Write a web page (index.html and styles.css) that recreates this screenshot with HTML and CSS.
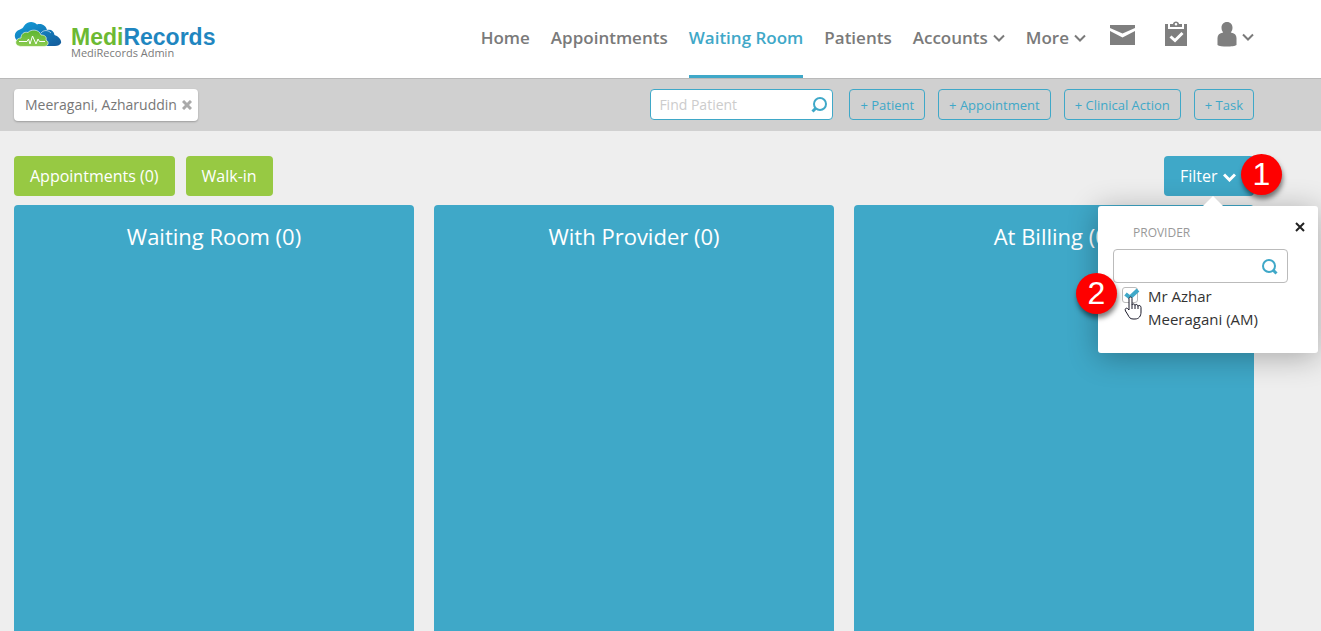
FILE: index.html
```html
<!DOCTYPE html>
<html lang="en">
<head>
  <meta charset="UTF-8" />
  <title>MediRecords - Waiting Room</title>
  <link rel="stylesheet" href="styles.css">
</head>
<body>

<header class="header">
  <a class="logo" href="#">
    <svg class="logo-cloud" width="48" height="26" viewBox="0 0 48 26" aria-hidden="true">
      <defs>
        <linearGradient id="blue" x1="0" y1="0" x2="1" y2="1">
          <stop offset="0" stop-color="#12a0dc" />
          <stop offset="1" stop-color="#155a9a" />
        </linearGradient>
        <linearGradient id="green" x1="0" y1="0" x2="0" y2="1">
          <stop offset="0" stop-color="#5cb531" />
          <stop offset="1" stop-color="#8ccb50" />
        </linearGradient>
      </defs>
      <path fill="url(#blue)" d="M4 19C-1 16 0 9 6 7.500C8 6.500 9 6 10 4C13 -1 20 -1 23 2.500C28 1 32 4 33 8C37 7 40 9 40.500 13C44 14 48 18 47 21C46 23 44 24 41 24H8Z" />
      <path fill="none" stroke="#fff" stroke-width="0.600" d="M27 11C30 7.500 34 8 37 11" />
      <path fill="url(#green)" stroke="#fff" stroke-width="0.600" d="M8 24.500C3 24.500 1 22 2 19C3 17 5 16 7 16C7 12 10 9.500 14 10.500C17 7 25 7 27 13C31 13 33 15 32 18C36 20 34 24.500 30 24.500Z" />
      <path fill="none" stroke="#fff" stroke-width="1" stroke-linejoin="round" d="M5 19.500H13L14.500 17L16 22L18.500 14L22 22L24 17L25.500 19.500H31" />
    </svg>
    <span class="logo-text">
      <span class="logo-name">Medi<span class="logo-blue">Records</span></span>
      <span class="logo-sub">MediRecords Admin</span>
    </span>
  </a>

  <nav class="nav">
    <a href="#">Home</a>
    <a href="#">Appointments</a>
    <a class="active" href="#">Waiting Room</a>
    <a href="#">Patients</a>
    <a href="#">Accounts <svg class="chevron" width="12" height="8" viewBox="0 0 12 8" aria-hidden="true"><path d="M1 1.500L6 6.500L11 1.500" /></svg></a>
    <a href="#">More <svg class="chevron" width="12" height="8" viewBox="0 0 12 8" aria-hidden="true"><path d="M1 1.500L6 6.500L11 1.500" /></svg></a>
  </nav>

  <div class="header-icons">
    <a href="#" aria-label="Messages">
      <svg width="25" height="26" viewBox="0 0 25 26"><path d="M0 4H25V7L12.500 12.500L0 7ZM0 10L12.500 16.500L25 10V24H0Z" /></svg>
    </a>
    <a href="#" aria-label="Tasks">
      <svg width="22" height="26" viewBox="0 0 22 26">
        <path d="M0 3H3V8H19V3H22V25H0Z" />
        <path fill-rule="evenodd" d="M5 3H8C8 -0.500 14 -0.500 14 3H17V6H5ZM9.700 3.200A1.300 1.300 0 1 0 12.300 3.200A1.300 1.300 0 1 0 9.700 3.200Z" />
        <path class="tick" d="M5.500 15.500L10 19.500L17.500 12" />
      </svg>
    </a>
    <a class="user" href="#" aria-label="Account">
      <svg width="20" height="26" viewBox="0 0 20 26"><path d="M10 1C13.500 1 15.500 3.500 15.500 6.500C15.500 8.500 15 10 13.800 11.500C17.500 12 19.500 14 19.500 17V24C17 26 3 26 0.500 24V17C0.500 14 2.500 12 6.200 11.500C5 10 4.500 8.500 4.500 6.500C4.500 3.500 6.500 1 10 1Z" /></svg>
      <svg class="chevron" width="12" height="8" viewBox="0 0 12 8"><path d="M1 1.500L6 6.500L11 1.500" /></svg>
    </a>
  </div>
</header>

<div class="toolbar">
  <div class="patient-tag">
    Meeragani, Azharuddin
    <button type="button" aria-label="Remove patient">
      <svg width="10" height="10" viewBox="0 0 10 10"><path d="M1 1L9 9M9 1L1 9" /></svg>
    </button>
  </div>
  <div class="find-patient">
    <input type="text" placeholder="Find Patient" aria-label="Find Patient" />
    <svg width="16" height="16" viewBox="0 0 16 16" aria-hidden="true"><circle cx="9" cy="7" r="6" /><path class="handle" d="M5 11L1.500 14.500" /></svg>
  </div>
  <div class="add-buttons">
    <button type="button">+ Patient</button>
    <button type="button">+ Appointment</button>
    <button type="button">+ Clinical Action</button>
    <button type="button">+ Task</button>
  </div>
</div>

<main class="main">
  <div class="actions">
    <button class="btn green" type="button">Appointments (0)</button>
    <button class="btn green" type="button">Walk-in</button>

    <div class="filter">
      <button class="btn blue" type="button">Filter <svg class="chevron" width="13" height="9" viewBox="0 0 13 9" aria-hidden="true"><path d="M1 1.500L6.500 7L12 1.500" /></svg></button>
      <span class="step step-one">1</span>

      <div class="popover">
        <button class="close" type="button" aria-label="Close">
          <svg width="10" height="10" viewBox="0 0 10 10"><path d="M1 1L9 9M9 1L1 9" /></svg>
        </button>
        <label class="popover-title" for="provider-search">PROVIDER</label>
        <div class="provider-search">
          <input type="text" id="provider-search" />
          <svg width="16" height="16" viewBox="0 0 16 16" aria-hidden="true"><circle cx="7" cy="7" r="6" /><path class="handle" d="M11 11L14.500 14.500" /></svg>
        </div>
        <div class="provider">
          <input type="checkbox" id="provider-am" checked />
          <label for="provider-am">Mr Azhar Meeragani (AM)</label>
          <svg class="provider-tick" width="16" height="12" viewBox="0 0 16 12" aria-hidden="true"><path d="M1.500 6L6 9.500L14 2" /></svg>
          <svg class="cursor" width="18" height="24" viewBox="0 0 18 24" aria-hidden="true">
            <path d="M5 14V2.500C5 0.500 8 0.500 8 2.500V9C8 7.500 11 7.500 11 9.500C11 8 14 8 14 10.500C14 9 17 9 17 11.500V16C17 20 15 23 11 23H9C6 23 5 21 4 19L1.500 15C0.500 13 2 11.500 3.500 12.500Z" />
            <path d="M8 9V13M11 9.500V13M14 10.500V13" />
          </svg>
        </div>
        <span class="step step-two">2</span>
      </div>
    </div>
  </div>

  <div class="columns">
    <section class="column"><h2>Waiting Room (0)</h2></section>
    <section class="column"><h2>With Provider (0)</h2></section>
    <section class="column"><h2>At Billing (0)</h2></section>
  </div>
</main>

</body>
</html>
```

FILE: styles.css
```css
* { box-sizing: border-box; }
body {
  display: flex;
  flex-direction: column;
  min-height: 100vh;
  margin: 0;
  background: #eee;
  color: #333;
  font-family: "Open Sans", sans-serif;
}
svg { display: block; flex: none; }
button, input { font-family: inherit; margin: 0; }
button { cursor: pointer; }
a { color: inherit; text-decoration: none; }

.chevron { fill: none; stroke: currentColor; stroke-width: 2; }

/* header */
.header {
  display: flex;
  height: 79px;
  padding: 0 67px 0 14px;
  background: #fff;
  border-bottom: 1px solid #b9b9b9;
  color: #7a7a7a;
}
.logo { display: flex; gap: 9px; margin-right: auto; padding-top: 22px; }
.logo-text { display: flex; flex-direction: column; padding-top: 5px; }
.logo-name {
  color: #6cb933;
  font: bold 23px/20px "Liberation Sans", sans-serif;
}
.logo-blue { color: #1f86c0; }
.logo-sub { font-size: 11px; line-height: 12px; }

.nav { display: flex; gap: 21px; font-size: 17px; font-weight: 600; line-height: 24px; }
.nav a { display: flex; align-items: center; gap: 5px; height: 78px; border-bottom: 3px solid transparent; }
.nav .active { color: #3fa8c8; border-color: #3fa8c8; }
.header-icons { display: flex; gap: 30px; margin-left: 24px; padding-top: 21px; fill: #7f7f7f; }
.tick { fill: none; stroke: #fff; stroke-width: 3; }
.user { display: flex; gap: 5px; }
.user .chevron { margin-top: 12px; }

/* toolbar */
.toolbar {
  display: flex;
  align-items: center;
  height: 52px;
  padding: 0 67px 1px 14px;
  background: #d0d0d0;
}
.patient-tag {
  display: flex;
  align-items: center;
  gap: 5px;
  height: 32px;
  margin-right: auto;
  padding: 0 6px 0 11px;
  background: #fff;
  border-radius: 4px;
  box-shadow: 0 1px 2px rgba(0, 0, 0, 0.25);
  color: #777;
  font-size: 14px;
}
.patient-tag button { padding: 0; border: 0; background: none; }
.patient-tag path { stroke: #aaa; stroke-width: 3; }
.find-patient, .provider-search {
  display: flex;
  align-items: center;
  background: #fff;
  border-radius: 4px;
}
.find-patient { width: 183px; height: 31px; padding: 0 5px 0 8px; border: 1px solid #3fa8c8; }
.find-patient input, .provider-search input {
  flex: 1;
  min-width: 0;
  padding: 0;
  border: 0;
  outline: 0;
  background: none;
  font-size: 14px;
}
.find-patient input::placeholder { color: #ccc; }
circle, .handle { fill: none; stroke: #3fa8c8; stroke-width: 2; }
.handle { stroke-width: 3; }
.add-buttons { display: flex; gap: 13px; margin-left: 16px; }
.add-buttons button {
  height: 31px;
  padding: 0 10px;
  background: none;
  border: 1px solid #3fa8c8;
  border-radius: 4px;
  color: #3fa8c8;
  font-size: 13px;
}

/* waiting room */
.main { display: flex; flex: 1; flex-direction: column; padding: 25px 67px 0 14px; }
.actions { display: flex; gap: 11px; }
.btn {
  display: flex;
  align-items: center;
  gap: 5px;
  height: 40px;
  padding: 0 16px;
  border: 0;
  border-radius: 4px;
  color: #fff;
  font-size: 16px;
}
.green { background: #97c943; }
.blue { width: 90px; background: #3fa8c8; }
.blue .chevron { stroke-width: 3; margin-top: 3px; }
.columns { display: flex; flex: 1; gap: 20px; margin-top: 9px; }
.column { flex: 1; background: #3fa8c8; border-radius: 4px 4px 0 0; }
.column h2 {
  margin: 15px 0 0;
  color: #fff;
  font-size: 22px;
  font-weight: 400;
  line-height: 32px;
  text-align: center;
}

/* filter popover */
.filter { position: relative; margin-left: auto; }
.popover {
  position: absolute;
  top: 50px;
  right: -64px;
  z-index: 1;
  width: 220px;
  height: 147px;
  padding: 17px 30px 0 15px;
  background: #fff;
  border-radius: 3px;
  box-shadow: 0 4px 30px rgba(0, 0, 0, 0.3);
}
.popover::before {
  content: "";
  position: absolute;
  top: -10px;
  left: 105px;
  border: 10px solid transparent;
  border-top: 0;
  border-bottom-color: #fff;
}
.close { position: absolute; top: 16px; right: 13px; padding: 0; border: 0; background: none; }
.close path { stroke: #222; stroke-width: 2; }
.popover-title {
  display: block;
  padding-left: 20px;
  color: #999;
  font-size: 12px;
  line-height: 20px;
}
.provider-search { height: 34px; margin-top: 6px; padding: 2px 9px 0; border: 1px solid #bbb; }
.provider {
  position: relative;
  display: flex;
  gap: 10px;
  padding: 2px 9px 0;
  font-size: 15px;
  line-height: 23px;
}
.provider input {
  flex: none;
  appearance: none;
  width: 16px;
  height: 16px;
  margin-top: 2px;
  background: #fff;
  border: 1px solid #bbb;
  border-radius: 3px;
}
.provider-tick { position: absolute; top: 5px; left: 11px; fill: none; stroke: #3fa8c8; stroke-width: 4; }
.cursor { position: absolute; top: 13px; left: 11px; fill: #fff; stroke: #1b1b2b; stroke-width: 1; }

/* numbered steps */
.step {
  position: absolute;
  z-index: 2;
  width: 41px;
  height: 41px;
  background: #fe0000;
  border-radius: 50%;
  box-shadow: 1px 4px 5px rgba(0, 0, 0, 0.5);
  color: #fff;
  font: 32px/41px "Liberation Sans", sans-serif;
  text-align: center;
}
.step-one { top: -2px; right: -28px; }
.step-two { top: 67px; left: -22px; }
```
